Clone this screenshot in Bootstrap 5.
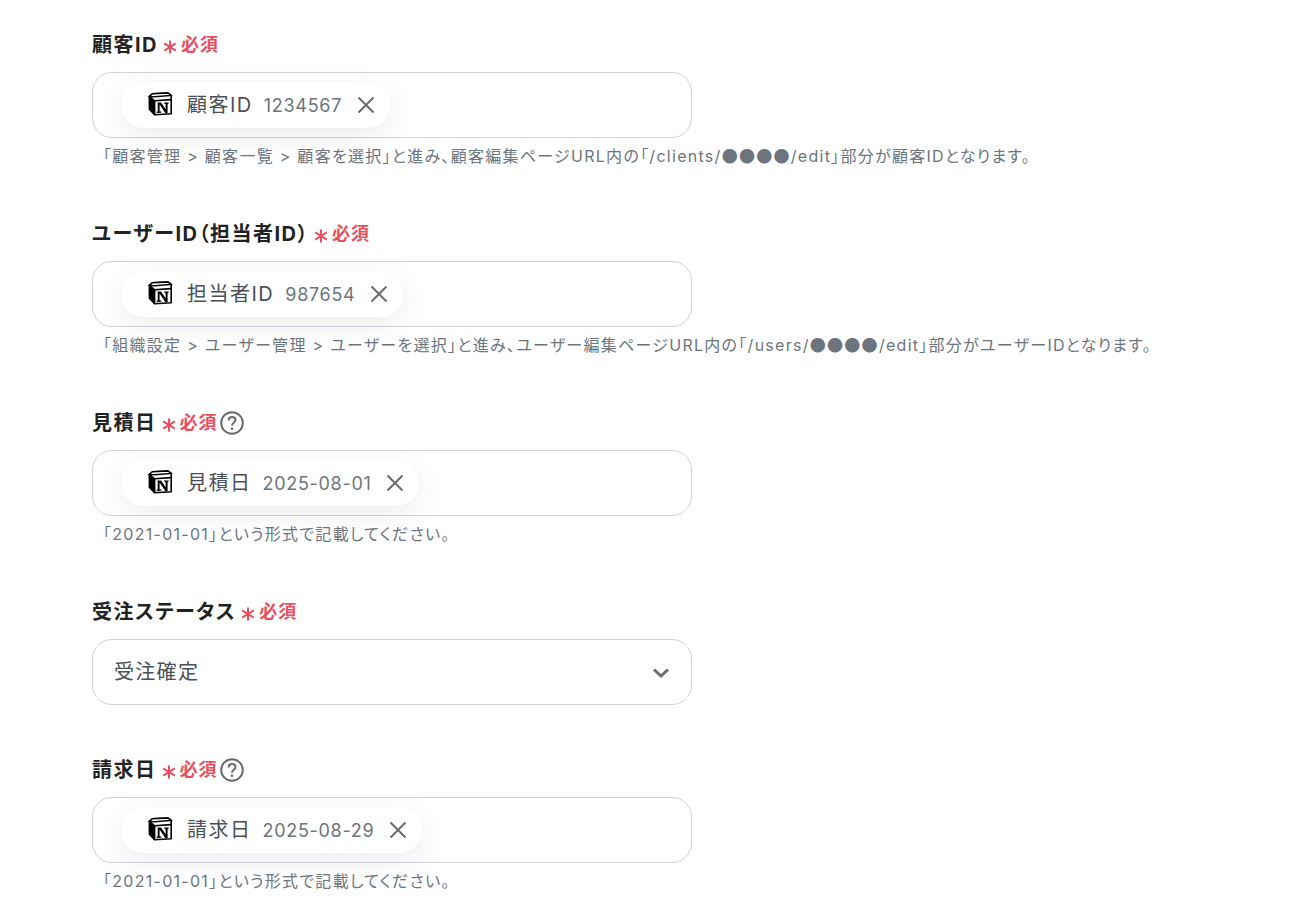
<!DOCTYPE html>
<html lang="ja">
<head>
  <meta charset="UTF-8">
  <title>フォーム</title>
  <link href="https://cdn.jsdelivr.net/npm/bootstrap@5.3.2/dist/css/bootstrap.min.css" rel="stylesheet">
  <style>
    body { font-family: Inter, "Noto Sans CJK JP", sans-serif; font-feature-settings: "palt"; background: #fff; color: #212529; overflow: hidden; }
    .page-wrap { padding: 27px 0 0 92px; }
    .field-block { height: 189px; }
    .field-block.no-help { height: 158px; }
    .field-label { font-size: 20px; font-weight: 700; line-height: 36px; height: 36px; letter-spacing: 1.5px; color: #222; }
    .req-star { margin: 4px 0 0 5px; }
    .req-text { color: #e9505f; font-size: 18px; font-weight: 700; margin-left: 4px; letter-spacing: 1px; }
    .q-icon { margin-left: 2px; }
    .field-box { width: 600px; height: 66px; border: 1px solid #ced4da; border-radius: 20px; margin-top: 9px; padding-left: 28px; }
    .chip-pill { height: 46px; border-radius: 23px; background: #fff; box-shadow: 0 8px 30px rgba(0,0,0,.08); padding: 0 14px 0 26px; }
    .chip-name { font-size: 20px; color: #495057; margin-left: 14px; letter-spacing: 1.5px; }
    .chip-val { font-size: 18px; color: #6c757d; margin-left: 11px; letter-spacing: .7px; }
    .chip-x { margin-left: 14px; }
    .help-line { font-size: 16px; color: #6c757d; line-height: 24px; margin: 6px 0 0 11px; white-space: nowrap; letter-spacing: 1.28px; }
    .dot-run { font-family: "Noto Sans CJK JP", sans-serif; font-feature-settings: normal; line-height: 1; }
    .select-text { font-size: 20px; color: #495057; margin-left: -7px; letter-spacing: 1.3px; }
    .select-arrow { margin: 2px 21px 0 0; }
  </style>
</head>
<body>
  <svg width="0" height="0" class="position-absolute">
    <defs>
      <symbol id="notion-mark" viewBox="0 0 26 26">
        <path d="M5.5 1.8 20.8 1l3.4 2.5v18.2l-16.6 1.1-5.2-5.6V4.4z" fill="#fff" stroke="#000" stroke-width="1.6" stroke-linejoin="round"/>
        <path d="M2.4 4.4 7.6 8.8l16.6-1.2M7.6 8.8v14" fill="none" stroke="#000" stroke-width="1.6"/>
        <path d="M2.4 4.4 5.5 1.8 20.8 1l3.4 2.5-16.6 1.2z" fill="#fff" stroke="#000" stroke-width="1.4"/>
        <path d="M2.4 5v12.2l5.2 5.6V9z" fill="#000"/>
        <path d="M9.6 10.4h4.4l4.6 6.9v-5.4l-1.5-.3v-1.2h4.6v1.2l-1.1.3v9.2l-2.2.1-5.8-8.6v6.7l1.6.3v1.2l-4.6.2v-1.2l1.1-.3v-8.6l-1-.9z" fill="#000"/>
      </symbol>
      <symbol id="close-mark" viewBox="0 0 20 20">
        <path d="M2.5 2.5l15 15M17.5 2.5l-15 15" fill="none" stroke="#6c6c6c" stroke-width="2"/>
      </symbol>
      <symbol id="help-mark" viewBox="0 0 24 24">
        <circle cx="12" cy="12" r="10.8" fill="none" stroke="#6c6c6c" stroke-width="2"/>
        <path d="M8.6 9.4c0-2 1.5-3.3 3.5-3.3s3.4 1.3 3.4 3c0 2.7-3.5 2.7-3.5 5.6" fill="none" stroke="#6c6c6c" stroke-width="2"/>
        <circle cx="12" cy="17.8" r="1.3" fill="#6c6c6c"/>
      </symbol>
      <symbol id="star-mark" viewBox="0 0 14 14">
        <path d="M7 .5v13M1.2 3.4l11.6 7.2M12.8 3.4 1.2 10.6" fill="none" stroke="#e9505f" stroke-width="2"/>
      </symbol>
    </defs>
  </svg>

  <div class="page-wrap">
    <div class="field-block">
      <div class="field-label d-flex align-items-center">顧客ID<svg class="req-star" width="14" height="14"><use href="#star-mark"/></svg><span class="req-text">必須</span></div>
      <div class="field-box d-flex align-items-center">
        <div class="chip-pill d-inline-flex align-items-center">
          <svg width="26" height="26"><use href="#notion-mark"/></svg>
          <span class="chip-name">顧客ID</span><span class="chip-val">1234567</span>
          <svg class="chip-x" width="20" height="20"><use href="#close-mark"/></svg>
        </div>
      </div>
      <div class="help-line">「顧客管理 &gt; 顧客一覧 &gt; 顧客を選択」と進み、顧客編集ページURL内の「/clients/<span class="dot-run">●●●●</span>/edit」部分が顧客IDとなります。</div>
    </div>

    <div class="field-block">
      <div class="field-label d-flex align-items-center">ユーザーID（担当者ID）<svg class="req-star" width="14" height="14"><use href="#star-mark"/></svg><span class="req-text">必須</span></div>
      <div class="field-box d-flex align-items-center">
        <div class="chip-pill d-inline-flex align-items-center">
          <svg width="26" height="26"><use href="#notion-mark"/></svg>
          <span class="chip-name">担当者ID</span><span class="chip-val">987654</span>
          <svg class="chip-x" width="20" height="20"><use href="#close-mark"/></svg>
        </div>
      </div>
      <div class="help-line">「組織設定 &gt; ユーザー管理 &gt; ユーザーを選択」と進み、ユーザー編集ページURL内の「/users/<span class="dot-run">●●●●</span>/edit」部分がユーザーIDとなります。</div>
    </div>

    <div class="field-block">
      <div class="field-label d-flex align-items-center">見積日<svg class="req-star" width="14" height="14"><use href="#star-mark"/></svg><span class="req-text">必須</span><svg class="q-icon" width="24" height="24"><use href="#help-mark"/></svg></div>
      <div class="field-box d-flex align-items-center">
        <div class="chip-pill d-inline-flex align-items-center">
          <svg width="26" height="26"><use href="#notion-mark"/></svg>
          <span class="chip-name">見積日</span><span class="chip-val">2025-08-01</span>
          <svg class="chip-x" width="20" height="20"><use href="#close-mark"/></svg>
        </div>
      </div>
      <div class="help-line">「2021-01-01」という形式で記載してください。</div>
    </div>

    <div class="field-block no-help">
      <div class="field-label d-flex align-items-center">受注ステータス<svg class="req-star" width="14" height="14"><use href="#star-mark"/></svg><span class="req-text">必須</span></div>
      <div class="field-box d-flex align-items-center justify-content-between">
        <span class="select-text">受注確定</span>
        <svg class="select-arrow" width="18" height="12" viewBox="0 0 18 12"><path d="M2 2.5l7 6.5 7-6.5" fill="none" stroke="#6c6c6c" stroke-width="3"/></svg>
      </div>
    </div>

    <div class="field-block">
      <div class="field-label d-flex align-items-center">請求日<svg class="req-star" width="14" height="14"><use href="#star-mark"/></svg><span class="req-text">必須</span><svg class="q-icon" width="24" height="24"><use href="#help-mark"/></svg></div>
      <div class="field-box d-flex align-items-center">
        <div class="chip-pill d-inline-flex align-items-center">
          <svg width="26" height="26"><use href="#notion-mark"/></svg>
          <span class="chip-name">請求日</span><span class="chip-val">2025-08-29</span>
          <svg class="chip-x" width="20" height="20"><use href="#close-mark"/></svg>
        </div>
      </div>
      <div class="help-line">「2021-01-01」という形式で記載してください。</div>
    </div>
  </div>

  <script src="https://cdn.jsdelivr.net/npm/bootstrap@5.3.2/dist/js/bootstrap.bundle.min.js"></script>
</body>
</html>
